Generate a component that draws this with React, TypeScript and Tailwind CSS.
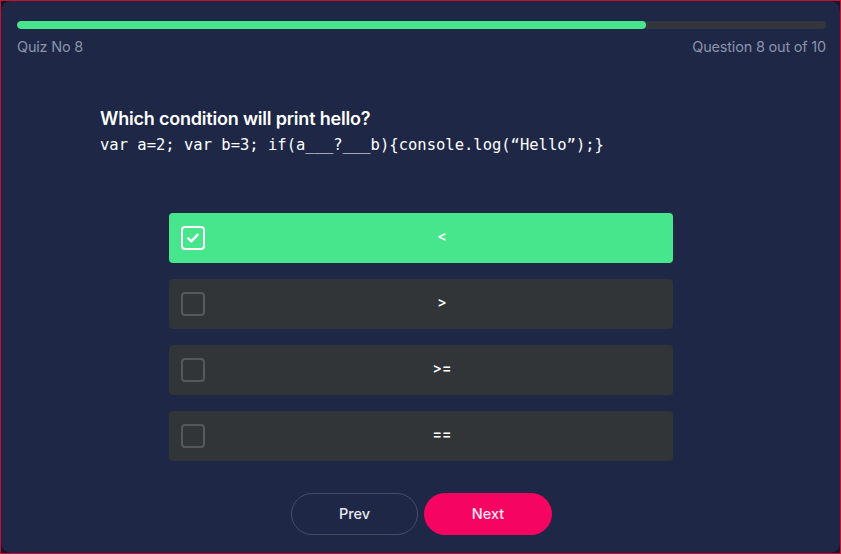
const options = ["<", ">", ">=", "=="];

function CheckBox({ checked }: { checked: boolean }) {
  if (checked) {
    return (
      <div className="w-6 h-6 rounded-[4px] border-[2.5px] border-white flex items-center justify-center shrink-0">
        <svg viewBox="0 0 24 24" className="w-4 h-4" fill="none" stroke="white" strokeWidth="3.5" strokeLinecap="round" strokeLinejoin="round">
          <path d="M5 12.5l4.5 4.5L19 7" />
        </svg>
      </div>
    );
  }
  return <div className="w-6 h-6 rounded-[4px] border-[2.5px] border-[#55585d] shrink-0" />;
}

export default function App() {
  const selected = 0;
  return (
    <div className="w-[841px] h-[554px] border border-[#c8102e] bg-[#14162b]" style={{ fontFamily: "Inter, 'Noto Sans', sans-serif" }}>
      <div className="h-full rounded-[10px] bg-[#1e2746] pl-4 pr-[14px] pt-5">
        {/* progress */}
        <div className="h-2 rounded-full bg-[#33363c] overflow-hidden">
          <div className="h-full w-[629px] rounded-full bg-[#47e68c]" />
        </div>
        <div className="flex justify-between mt-[7px] text-[14.5px] text-[#8a93ab] tracking-[-0.2px]">
          <span>Quiz No 8</span>
          <span>Question 8 out of 10</span>
        </div>

        {/* question */}
        <div className="pl-[83px] mt-[50px]">
          <h2 className="text-[18px] font-semibold text-white tracking-[-0.2px] leading-[22px]">
            Which condition will print hello?
          </h2>
          <p className="mt-[5px] text-[15.5px] text-white leading-[20px]" style={{ fontFamily: "'DejaVu Sans Mono', monospace" }}>
            var a=2; var b=3; if(a___?___b){"{"}console.log(“Hello”);{"}"}
          </p>
        </div>

        {/* options */}
        <div className="w-[504px] ml-[152px] mt-[58px] flex flex-col gap-4">
          {options.map((o, i) => (
            <div
              key={o}
              className={`h-[50px] rounded-[4px] flex items-center pl-3 ${i === selected ? "bg-[#47e68c]" : "bg-[#323538]"}`}
            >
              <CheckBox checked={i === selected} />
              <span className="flex-1 text-center pl-[6px] pb-[4px] text-[14px] font-semibold text-white">{o}</span>
            </div>
          ))}
        </div>

        {/* nav */}
        <div className="flex justify-center gap-[6px] mt-8">
          <button className="w-[127px] h-[42px] rounded-full border border-[#454c66] text-[14.5px] font-medium text-[#e6e8f0]">
            Prev
          </button>
          <button className="w-[128px] h-[42px] rounded-full bg-[#f50561] text-[14.5px] font-medium text-[#fde6f0]">
            Next
          </button>
        </div>
      </div>
    </div>
  );
}
